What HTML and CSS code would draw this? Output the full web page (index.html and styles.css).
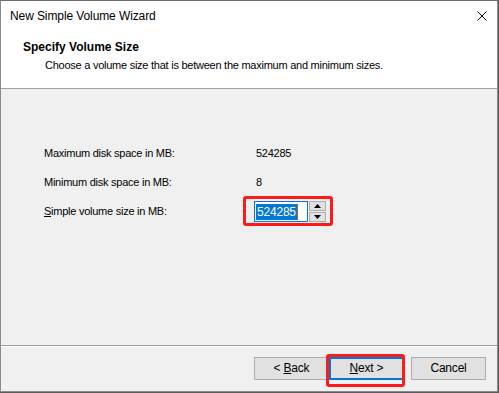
FILE: index.html
```html
<!DOCTYPE html>
<html>
<head>
<meta charset="utf-8">
<link rel="stylesheet" href="styles.css">
</head>
<body>
<div class="window">
  <div class="titlebar">
    <span class="title">New Simple Volume Wizard</span>
    <svg class="close" width="10" height="10" viewBox="0 0 10 10"><path d="M0.5 0.5 L9.5 9.5 M9.5 0.5 L0.5 9.5" stroke="#000" stroke-width="1" fill="none"/></svg>
  </div>
  <div class="header">
    <div class="heading">Specify Volume Size</div>
    <div class="subtitle">Choose a volume size that is between the maximum and minimum sizes.</div>
  </div>
  <div class="content">
    <div class="form">
      <div class="label">Maximum disk space in MB:</div>
      <div class="value">524285</div>
      <div class="label">Minimum disk space in MB:</div>
      <div class="value">8</div>
      <div class="label"><u>S</u>imple volume size in MB:</div>
      <div class="value">
        <div class="spin-wrap">
          <div class="input"><span class="sel">524285</span><span class="caret"></span></div>
          <div class="spinner">
            <div class="sbtn"><svg width="7" height="4" viewBox="0 0 7 4"><path d="M0 4 L3.5 0 L7 4 Z" fill="#000"/></svg></div>
            <div class="sbtn"><svg width="7" height="4" viewBox="0 0 7 4"><path d="M0 0 L3.5 4 L7 0 Z" fill="#000"/></svg></div>
          </div>
          <div class="mark mark-input"></div>
        </div>
      </div>
    </div>
  </div>
  <div class="footer">
    <div class="btn"><span>&lt; <u>B</u>ack</span></div>
    <div class="btn btn-default"><span><u>N</u>ext &gt;</span><div class="mark mark-next"></div></div>
    <div class="btn btn-cancel"><span>Cancel</span></div>
  </div>
</div>
</body>
</html>
```

FILE: styles.css
```css
html, body {
  margin: 0;
  padding: 0;
}
body {
  width: 499px;
  height: 393px;
  background: #5a5a5a;
  font-family: "Liberation Sans", Arial, sans-serif;
  font-size: 11px;
  letter-spacing: -0.25px;
  color: #000;
  overflow: hidden;
}
.window {
  box-sizing: border-box;
  width: 498px;
  height: 392px;
  border: 1px solid #8a8a8a;
  border-top-color: #6b6b6b;
  background: #f0f0f0;
  display: flex;
  flex-direction: column;
}
.titlebar {
  height: 29px;
  background: #fff;
  display: flex;
  align-items: center;
  justify-content: space-between;
  padding: 0 10px 0 9px;
  flex: none;
}
.title {
  font-size: 12px;
  letter-spacing: -0.1px;
  padding-top: 1px;
}
.close {
  display: block;
  margin-top: 1px;
}
.header {
  height: 59px;
  background: #fff;
  border-bottom: 1px solid #a0a0a0;
  box-sizing: border-box;
  padding: 10px 0 0 22px;
  flex: none;
}
.heading {
  font-weight: bold;
  font-size: 12px;
  letter-spacing: 0;
  line-height: 15px;
}
.subtitle {
  padding-left: 22px;
  line-height: 15px;
  margin-top: 3px;
}
.content {
  flex: 1;
  border-bottom: 1px solid #a0a0a0;
  box-shadow: 0 1px 0 #fff;
  padding: 50px 0 0 43px;
}
.form {
  display: grid;
  grid-template-columns: 212px auto;
  grid-auto-rows: 29px;
  align-items: center;
}
.label, .value {
  line-height: 15px;
}
.spin-wrap {
  position: relative;
  display: flex;
  align-items: stretch;
  height: 21px;
  margin-left: -2px;
}
.input {
  box-sizing: border-box;
  width: 54px;
  height: 21px;
  border: 1px solid #0078d7;
  background: #fff;
  display: flex;
  align-items: center;
  padding-left: 1px;
}
.sel {
  background: #0078d7;
  color: #fff;
  line-height: 16px;
  padding: 0 1px;
  font-size: 12px;
  letter-spacing: -0.2px;
}
.caret {
  width: 1px;
  height: 16px;
  background: #c25a1a;
}
.spinner {
  margin-left: 1px;
  width: 17px;
  display: flex;
  flex-direction: column;
  gap: 1px;
}
.sbtn {
  flex: 1;
  box-sizing: border-box;
  border: 1px solid #adadad;
  background: #e1e1e1;
  display: flex;
  align-items: center;
  justify-content: center;
}
.sbtn svg {
  display: block;
}
.mark {
  position: absolute;
  box-sizing: border-box;
  border: 3px solid #ff1a1a;
  border-radius: 3px;
  pointer-events: none;
}
.mark-input {
  left: -11px;
  top: -5px;
  width: 90px;
  height: 30px;
}
.footer {
  flex: none;
  height: 45px;
  display: flex;
  align-items: flex-start;
  padding: 11px 0 0 253px;
  box-sizing: border-box;
}
.btn {
  position: relative;
  box-sizing: border-box;
  width: 75px;
  height: 23px;
  border: 1px solid #adadad;
  background: #e1e1e1;
  display: flex;
  align-items: center;
  justify-content: center;
  line-height: 15px;
  font-size: 12px;
  letter-spacing: -0.2px;
}
.btn-default {
  border: 2px solid #0078d7;
}
.btn-cancel {
  margin-left: 7px;
}
.mark-next {
  left: -5px;
  top: -5px;
  width: 79px;
  height: 33px;
}
```
